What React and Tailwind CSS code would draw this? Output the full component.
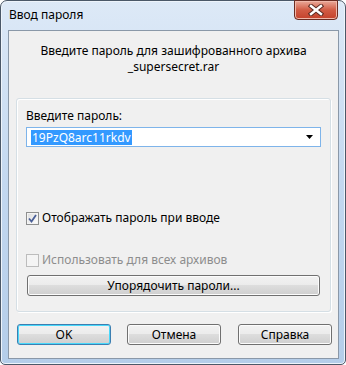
export default function App() {
  const font = { fontFamily: '"Noto Sans", "Open Sans", sans-serif' };
  return (
    <div className="w-[346px] h-[365px] bg-white" style={font}>
      <div className="w-[346px] h-[365px] rounded-t-[7px] rounded-b-[5px] border border-[#4b5868] bg-gradient-to-b from-[#dde9f7] via-[#c3d8f0] to-[#b4cde9] flex flex-col shadow-[inset_0_0_0_1px_#eef4fb]">
        <div className="h-[29px] flex items-start relative">
          <div className="pl-[8px] pt-[6px] text-[12px] leading-[16px] text-black">Ввод пароля</div>
          <div className="absolute right-[7px] top-[-1px] w-[44px] h-[20px] rounded-b-[4px] border border-[#6b2c22] bg-gradient-to-b from-[#e9a99a] via-[#d15b44] to-[#c4412b] flex items-center justify-center shadow-[inset_0_0_0_1px_#f0b8aa]">
            <svg width="16" height="12" viewBox="0 0 16 12">
              <path d="M3 2 L13 10 M13 2 L3 10" stroke="#5a2a22" strokeWidth="4.4" strokeLinecap="square" />
              <path d="M3 2 L13 10 M13 2 L3 10" stroke="#ffffff" strokeWidth="2.4" strokeLinecap="square" />
            </svg>
          </div>
        </div>
        <div className="ml-[7px] mr-[6px] h-[329px] border border-[#8a98a8] bg-[#f0f0f0] flex flex-col">
          <div className="pt-[12px] text-center text-[12px] leading-[16px] text-black">
            <div>Введите пароль для зашифрованного архива</div>
            <div>_supersecret.rar</div>
          </div>
          <div className="ml-[7px] mt-[23px] w-[315px] h-[214px] rounded-[3px] border border-[#d5dfe5] shadow-[inset_1px_1px_0_#ffffff,1px_1px_0_#ffffff] flex flex-col pl-[9px] pr-[9px]">
            <div className="mt-[10px] text-[12px] leading-[14px] text-black">Введите пароль:</div>
            <div className="mt-[4px] h-[20px] w-[295px] border border-[#7eb4ea] bg-white flex items-center pl-[4px] pr-[6px]">
              <span className="bg-[#3399ff] text-white text-[12px] leading-[15px] px-[1px]">19PzQ8arc11rkdv</span>
              <div className="flex-1" />
              <svg width="8" height="4" viewBox="0 0 8 4"><path d="M0 0 H7 L3.5 4 Z" fill="#000" /></svg>
            </div>
            <div className="mt-[64px] h-[14px] flex items-center gap-[3px]">
              <div className="w-[13px] h-[13px] border border-[#8e8f8f] bg-gradient-to-br from-[#dcdcdc] to-[#ffffff] flex items-center justify-center shadow-[inset_0_0_0_1px_#f4f4f4]">
                <svg width="9" height="9" viewBox="0 0 9 9"><path d="M1 4.5 L3.5 7.5 L8 1" fill="none" stroke="#4a5f97" strokeWidth="1.8" /></svg>
              </div>
              <span className="text-[12px] leading-[14px] text-black">Отображать пароль при вводе</span>
            </div>
            <div className="mt-[28px] h-[14px] flex items-center gap-[3px]">
              <div className="w-[13px] h-[13px] border border-[#bcbcbc] bg-[#f4f4f4]" />
              <span className="text-[12px] leading-[14px] text-[#8d8d8d]">Использовать для всех архивов</span>
            </div>
            <div className="mt-[8px] ml-[1px] w-[293px] h-[21px] rounded-[3px] border border-[#707070] bg-[linear-gradient(to_bottom,#f2f2f2_0%,#ebebeb_50%,#dddddd_50%,#cfcfcf_100%)] shadow-[inset_0_0_0_1px_#fcfcfc] flex items-center justify-center text-[12px] leading-[14px] text-black">
              Упорядочить пароли...
            </div>
          </div>
          <div className="mt-[12px] ml-[8px] flex gap-[16px]">
            <div className="w-[94px] h-[21px] rounded-[3px] border border-[#3c7fb1] bg-[linear-gradient(to_bottom,#f2f2f2_0%,#ebebeb_50%,#dddddd_50%,#cfcfcf_100%)] shadow-[inset_0_0_0_1px_#48d8fb] flex items-center justify-center text-[12px] leading-[14px] text-black">OK</div>
            <div className="w-[94px] h-[21px] rounded-[3px] border border-[#707070] bg-[linear-gradient(to_bottom,#f2f2f2_0%,#ebebeb_50%,#dddddd_50%,#cfcfcf_100%)] shadow-[inset_0_0_0_1px_#fcfcfc] flex items-center justify-center text-[12px] leading-[14px] text-black">Отмена</div>
            <div className="ml-[1px] w-[94px] h-[21px] rounded-[3px] border border-[#707070] bg-[linear-gradient(to_bottom,#f2f2f2_0%,#ebebeb_50%,#dddddd_50%,#cfcfcf_100%)] shadow-[inset_0_0_0_1px_#fcfcfc] flex items-center justify-center text-[12px] leading-[14px] text-black">Справка</div>
          </div>
        </div>
      </div>
    </div>
  );
}
